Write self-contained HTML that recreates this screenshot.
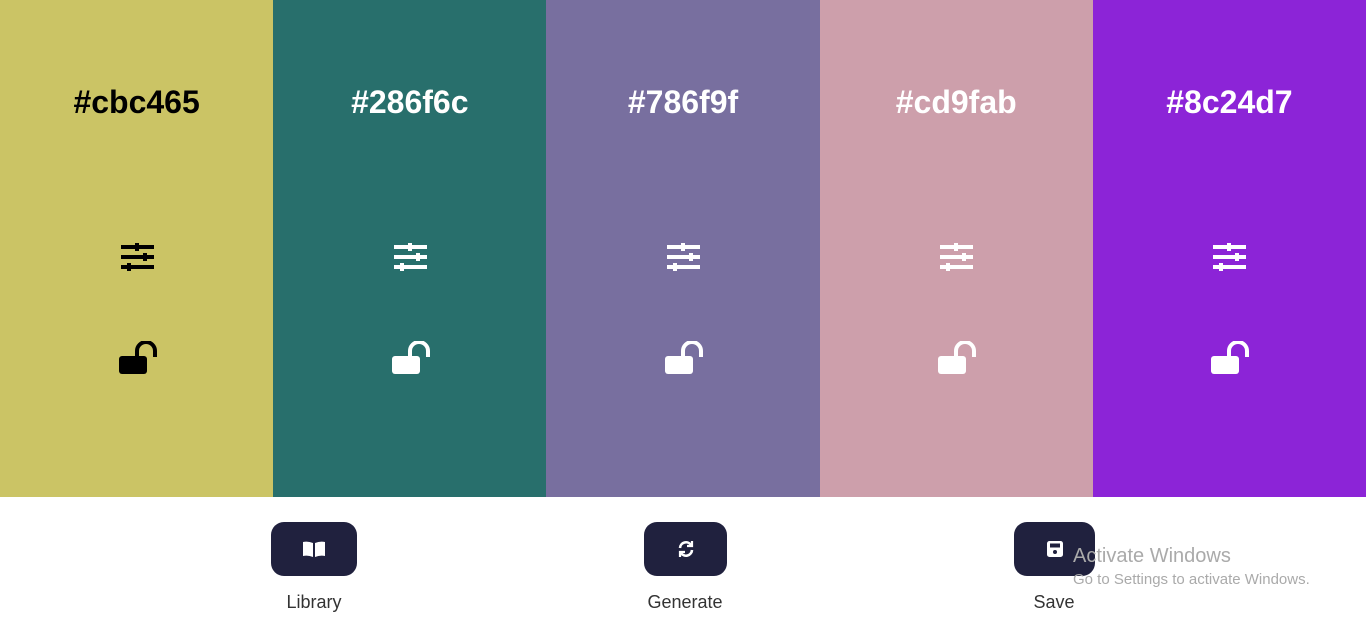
<!DOCTYPE html>
<html><head><style>
body{margin:0;width:1366px;height:621px;overflow:hidden;background:#fff;font-family:"Liberation Sans",sans-serif;position:relative}
.cols{display:flex;height:497px}
.c{flex:1;position:relative}
.c h2{position:absolute;top:84px;left:0;right:0;margin:0;text-align:center;font-size:32px;font-weight:bold}
.c svg{position:absolute;left:50%}
.btn{position:absolute;top:522px;height:54px;background:#20213e;border-radius:13px}
.btn svg{position:absolute;left:50%;top:50%;transform:translate(-50%,-50%)}
.lbl{position:absolute;top:592px;font-size:18px;color:#333;transform:translateX(-50%)}
.aw{position:absolute;left:1073px;top:545px;color:#aaa;font-size:20px}
.aw2{position:absolute;left:1073px;top:571px;color:#aaa;font-size:15px}
</style></head><body>
<div class="cols">
<div class="c" style="background:#cbc465;color:#000"><h2>#cbc465</h2>
<svg style="margin-left:-16px;top:242px" width="33" height="30" viewBox="0 0 33 30" fill="currentColor"><rect x="0" y="3" width="33" height="4"/><rect x="0" y="13" width="33" height="4"/><rect x="0" y="23" width="33" height="4"/><rect x="14" y="1" width="4" height="8"/><rect x="22" y="11" width="4" height="8"/><rect x="6" y="21" width="4" height="8"/></svg>
<svg style="margin-left:-18px;top:341px" width="38" height="34" viewBox="0 0 38 34"><rect x="0" y="15" width="28" height="18" rx="3" fill="currentColor"/><path d="M18 16V10a9 9 0 0 1 18 0v6" fill="none" stroke="currentColor" stroke-width="4"/></svg></div>
<div class="c" style="background:#286f6c;color:#fff"><h2>#286f6c</h2>
<svg style="margin-left:-16px;top:242px" width="33" height="30" viewBox="0 0 33 30" fill="currentColor"><rect x="0" y="3" width="33" height="4"/><rect x="0" y="13" width="33" height="4"/><rect x="0" y="23" width="33" height="4"/><rect x="14" y="1" width="4" height="8"/><rect x="22" y="11" width="4" height="8"/><rect x="6" y="21" width="4" height="8"/></svg>
<svg style="margin-left:-18px;top:341px" width="38" height="34" viewBox="0 0 38 34"><rect x="0" y="15" width="28" height="18" rx="3" fill="currentColor"/><path d="M18 16V10a9 9 0 0 1 18 0v6" fill="none" stroke="currentColor" stroke-width="4"/></svg></div>
<div class="c" style="background:#786f9f;color:#fff"><h2>#786f9f</h2>
<svg style="margin-left:-16px;top:242px" width="33" height="30" viewBox="0 0 33 30" fill="currentColor"><rect x="0" y="3" width="33" height="4"/><rect x="0" y="13" width="33" height="4"/><rect x="0" y="23" width="33" height="4"/><rect x="14" y="1" width="4" height="8"/><rect x="22" y="11" width="4" height="8"/><rect x="6" y="21" width="4" height="8"/></svg>
<svg style="margin-left:-18px;top:341px" width="38" height="34" viewBox="0 0 38 34"><rect x="0" y="15" width="28" height="18" rx="3" fill="currentColor"/><path d="M18 16V10a9 9 0 0 1 18 0v6" fill="none" stroke="currentColor" stroke-width="4"/></svg></div>
<div class="c" style="background:#cd9fab;color:#fff"><h2>#cd9fab</h2>
<svg style="margin-left:-16px;top:242px" width="33" height="30" viewBox="0 0 33 30" fill="currentColor"><rect x="0" y="3" width="33" height="4"/><rect x="0" y="13" width="33" height="4"/><rect x="0" y="23" width="33" height="4"/><rect x="14" y="1" width="4" height="8"/><rect x="22" y="11" width="4" height="8"/><rect x="6" y="21" width="4" height="8"/></svg>
<svg style="margin-left:-18px;top:341px" width="38" height="34" viewBox="0 0 38 34"><rect x="0" y="15" width="28" height="18" rx="3" fill="currentColor"/><path d="M18 16V10a9 9 0 0 1 18 0v6" fill="none" stroke="currentColor" stroke-width="4"/></svg></div>
<div class="c" style="background:#8c24d7;color:#fff"><h2>#8c24d7</h2>
<svg style="margin-left:-16px;top:242px" width="33" height="30" viewBox="0 0 33 30" fill="currentColor"><rect x="0" y="3" width="33" height="4"/><rect x="0" y="13" width="33" height="4"/><rect x="0" y="23" width="33" height="4"/><rect x="14" y="1" width="4" height="8"/><rect x="22" y="11" width="4" height="8"/><rect x="6" y="21" width="4" height="8"/></svg>
<svg style="margin-left:-18px;top:341px" width="38" height="34" viewBox="0 0 38 34"><rect x="0" y="15" width="28" height="18" rx="3" fill="currentColor"/><path d="M18 16V10a9 9 0 0 1 18 0v6" fill="none" stroke="currentColor" stroke-width="4"/></svg></div>
</div>
<div class="btn" style="left:271px;width:86px"><svg width="22" height="16" viewBox="0 0 22 16" fill="#fff"><path d="M0 1Q5 0 10 2V16Q5 14 0 15Z"/><path d="M22 1Q17 0 12 2V16Q17 14 22 15Z"/></svg></div>
<div class="btn" style="left:644px;width:83px"><svg width="18" height="18" viewBox="0 0 18 18" fill="none" stroke="#fff" stroke-width="2.6"><path d="M3 8A6 6 0 0 1 14 5"/><path d="M15 10A6 6 0 0 1 4 13"/><path d="M15 1v5h-5M3 17v-5h5" stroke-width="2.2"/></svg></div>
<div class="btn" style="left:1014px;width:81px"><svg width="16" height="16" viewBox="0 0 16 16"><rect x="0" y="0" width="16" height="16" rx="2.5" fill="#fff"/><rect x="3" y="2.5" width="10" height="4" fill="#20213e"/><circle cx="8" cy="11" r="2" fill="#20213e"/></svg></div>
<div class="lbl" style="left:314px">Library</div>
<div class="lbl" style="left:685px">Generate</div>
<div class="lbl" style="left:1054px">Save</div>
<div class="aw">Activate Windows</div>
<div class="aw2">Go to Settings to activate Windows.</div>
</body></html>
